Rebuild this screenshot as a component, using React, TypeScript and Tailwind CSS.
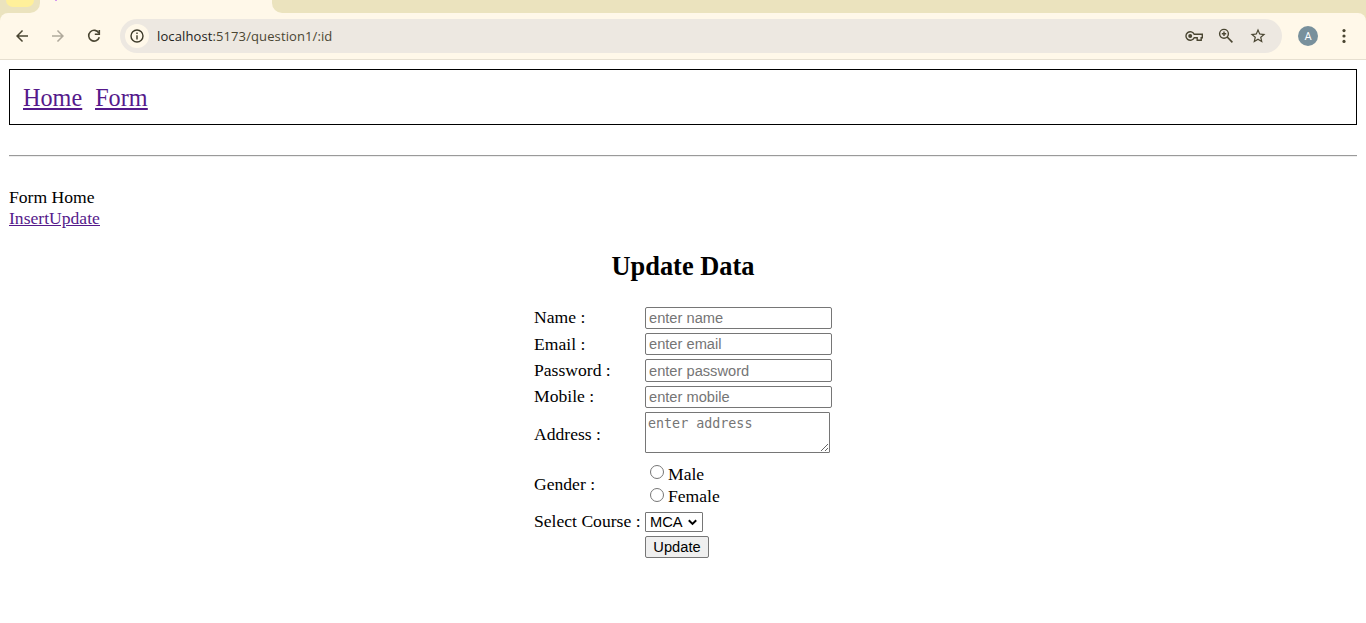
import React from 'react';

const Arrow = ({ className, back }: { className: string; back?: boolean }) => (
  <svg className={className} viewBox="0 0 24 24" fill="currentColor">
    <path
      d={
        back
          ? 'M20 11H7.83l5.59-5.59L12 4l-8 8 8 8 1.41-1.41L7.83 13H20v-2z'
          : 'M12 4l-1.41 1.41L16.17 11H4v2h12.17l-5.58 5.59L12 20l8-8z'
      }
    />
  </svg>
);

const Toolbar = () => (
  <div className="bg-[#ebe3be]">
    <div className="flex h-[13px] overflow-hidden bg-[#fff8e9]">
      <div className="h-[13px] w-10 rounded-br-[10px] bg-[#ebe3be]">
        <div className="ml-[6px] h-[7px] w-7 rounded-b-[8px] bg-[#fff09a]" />
      </div>
      <div className="ml-[15px] h-px w-[2px] bg-[#d49af0]" />
      <div className="ml-[215px] h-[13px] flex-1 rounded-bl-[10px] bg-[#ebe3be]" />
    </div>
    <div className="flex h-[47px] items-center rounded-t-[8px] border-b border-[#e6dfd0] bg-[#fff8e9] text-[#4a4632]">
      <Arrow back className="ml-[13px] h-[18px] w-[18px] text-[#4a4632]" />
      <Arrow className="ml-[18px] h-[18px] w-[18px] text-[#b0aa9c]" />
      <svg className="ml-[19px] h-4 w-4 text-[#4a4632]" viewBox="0 0 16 16" fill="none" stroke="currentColor" strokeWidth="1.6">
        <path d="M12.9 5.2A5.4 5.4 0 1 0 13.3 9.2" />
        <path d="M13.3 2v4.3H8.8" />
      </svg>
      <div className="ml-[18px] flex h-[34px] w-[1162px] items-center rounded-full bg-[#ede8e1]">
        <div className="ml-[5px] flex h-6 w-6 items-center justify-center rounded-full bg-[#fff8e9]">
          <svg className="h-[14px] w-[14px]" viewBox="0 0 14 14" fill="none" stroke="#3d3a29" strokeWidth="1.4">
            <circle cx="7" cy="7" r="6" />
            <path d="M7 6.2v4.2M7 3.6v1.5" />
          </svg>
        </div>
        <span className="ml-2 w-[1028px] whitespace-nowrap font-['Open_Sans',sans-serif] text-[13px] leading-5 tracking-[0.11px] text-[#4a4632]">
          <span className="text-[#24231c]">localhost</span>:5173/question1/:id
        </span>
        <svg className="h-[14px] w-[18px]" viewBox="0 0 18 14" fill="none" stroke="currentColor" strokeWidth="1.4">
          <path d="M9.2 5.3A4.3 4.3 0 1 0 9.2 8.7H12.2v2.6h4V8.7h1.1V5.3z" />
          <circle cx="5.2" cy="7" r="2" fill="currentColor" stroke="none" />
        </svg>
        <svg className="ml-[15px] h-4 w-4" viewBox="0 0 16 16" fill="none" stroke="currentColor" strokeWidth="1.4">
          <circle cx="6" cy="5.8" r="4.4" />
          <path d="M9.2 9l5.2 5.4" strokeWidth="1.6" />
          <path d="M6 3.6v4.4M3.8 5.8h4.4" />
        </svg>
        <svg className="ml-[15px] h-[18px] w-[18px]" viewBox="0 0 24 24" fill="currentColor">
          <path d="M22 9.24l-7.19-.62L12 2 9.19 8.63 2 9.24l5.46 4.73L5.82 21 12 17.27 18.18 21l-1.63-7.03L22 9.24zM12 15.4l-3.76 2.27 1-4.28-3.32-2.88 4.38-.38L12 6.1l1.71 4.04 4.38.38-3.32 2.88 1 4.28L12 15.4z" />
        </svg>
      </div>
      <div className="ml-4 flex h-5 w-5 items-center justify-center rounded-full bg-[#78909c] font-['Roboto',sans-serif] text-[11px] text-white">
        A
      </div>
      <svg className="ml-[18px] h-4 w-4 text-[#4a4632]" viewBox="0 0 16 16" fill="currentColor">
        <circle cx="8" cy="2.6" r="1.6" />
        <circle cx="8" cy="8" r="1.6" />
        <circle cx="8" cy="13.4" r="1.6" />
      </svg>
    </div>
  </div>
);

const field =
  "block w-[187px] rounded-[2px] border border-[#767676] bg-white px-[3px] py-0 font-['Liberation_Sans',sans-serif] text-[14.667px] leading-[18px] placeholder:text-[#757575] outline-none";

const Row = ({
  label,
  className,
  labelClass = '',
  children,
}: {
  label?: string;
  className: string;
  labelClass?: string;
  children: React.ReactNode;
}) => (
  <div className={`flex items-center ${className}`}>
    <div className={`w-[111px] shrink-0 whitespace-nowrap ${labelClass}`}>{label}</div>
    {children}
  </div>
);

const Radio = ({ label, className, labelClass }: { label: string; className: string; labelClass: string }) => (
  <label className={`flex ${className}`}>
    <input type="radio" name="gender" className="mr-1 ml-[5px] h-[14px] w-[14px] appearance-none rounded-full border border-[#767676] bg-white checked:border-4" />
    <span className={`leading-[22px] ${labelClass}`}>{label}</span>
  </label>
);

export default function App() {
  return (
    <div className="h-[623px] overflow-hidden bg-white font-['Liberation_Serif',serif] text-[17.6px] leading-[21px] text-black">
      <Toolbar />
      <main className="px-[9px] pt-[9px]">
        <nav className="flex h-14 items-center gap-[13px] border border-black px-[13px] text-[24.2px] text-[#551a8b] underline">
          <a href="#home">Home</a>
          <a href="#form">Form</a>
        </nav>
        <hr className="mt-[30px] h-[2px] border-t border-b border-t-[#9a9a9a] border-b-[#eeeeee]" />
        <p className="mt-[30px]">Form Home</p>
        <div className="flex text-[#551a8b] underline">
          <a href="#insert">Insert</a>
          <a href="#update">Update</a>
        </div>
        <h2 className="mt-[22px] text-center text-[26.4px] leading-[30px] font-bold">Update Data</h2>
        <form className="mx-auto mt-[26px] w-[298px]" onSubmit={(e) => e.preventDefault()}>
          <Row label="Name :" className="h-[22px]" labelClass="pb-[2px]">
            <input className={`${field} h-[22px]`} placeholder="enter name" />
          </Row>
          <Row label="Email :" className="mt-1 h-[22px]">
            <input className={`${field} h-[22px]`} placeholder="enter email" />
          </Row>
          <Row label="Password :" className="mt-1 h-[23px]">
            <input type="password" className={`${field} h-[23px]`} placeholder="enter password" />
          </Row>
          <Row label="Mobile :" className="mt-1 h-[22px]" labelClass="pb-[2px]">
            <input className={`${field} h-[22px]`} placeholder="enter mobile" />
          </Row>
          <Row label="Address :" className="mt-1 h-[41px]" labelClass="pt-1">
            <textarea
              className="block h-[41px] w-[185px] resize overflow-auto rounded-[1px] border border-[#767676] bg-white px-[2px] py-[2px] font-['DejaVu_Sans_Mono',monospace] text-[13.35px] leading-[17px] outline-none placeholder:text-[#757575]"
              placeholder="enter address"
            />
          </Row>
          <Row label="Gender :" className="mt-3 h-[41px]" labelClass="pb-[2px]">
            <div>
              <Radio label="Male" className="h-[23px]" labelClass="mt-[-2px]" />
              <Radio label="Female" className="h-[18px]" labelClass="mt-[-3px]" />
            </div>
          </Row>
          <Row label="Select Course :" className="mt-[6px] h-5" labelClass="pb-[2px]">
            <div className="relative">
              <select className="block h-5 w-[58px] appearance-none rounded-[1px] border border-[#767676] bg-white pl-1 font-['Liberation_Sans',sans-serif] text-[14.667px] leading-[18px] outline-none">
                <option>MCA</option>
              </select>
              <svg className="pointer-events-none absolute top-[7px] right-[6px] h-[7px] w-[9px]" viewBox="0 0 9 7" fill="none" stroke="black" strokeWidth="2">
                <path d="M.8 1.3l3.7 3.6 3.7-3.6" />
              </svg>
            </div>
          </Row>
          <Row className="mt-1 h-[22px]">
            <button className="h-[22px] w-16 rounded-[2px] border border-[#767676] bg-[#efefef] font-['Liberation_Sans',sans-serif] text-[14.667px] leading-[18px]">
              Update
            </button>
          </Row>
        </form>
      </main>
    </div>
  );
}
